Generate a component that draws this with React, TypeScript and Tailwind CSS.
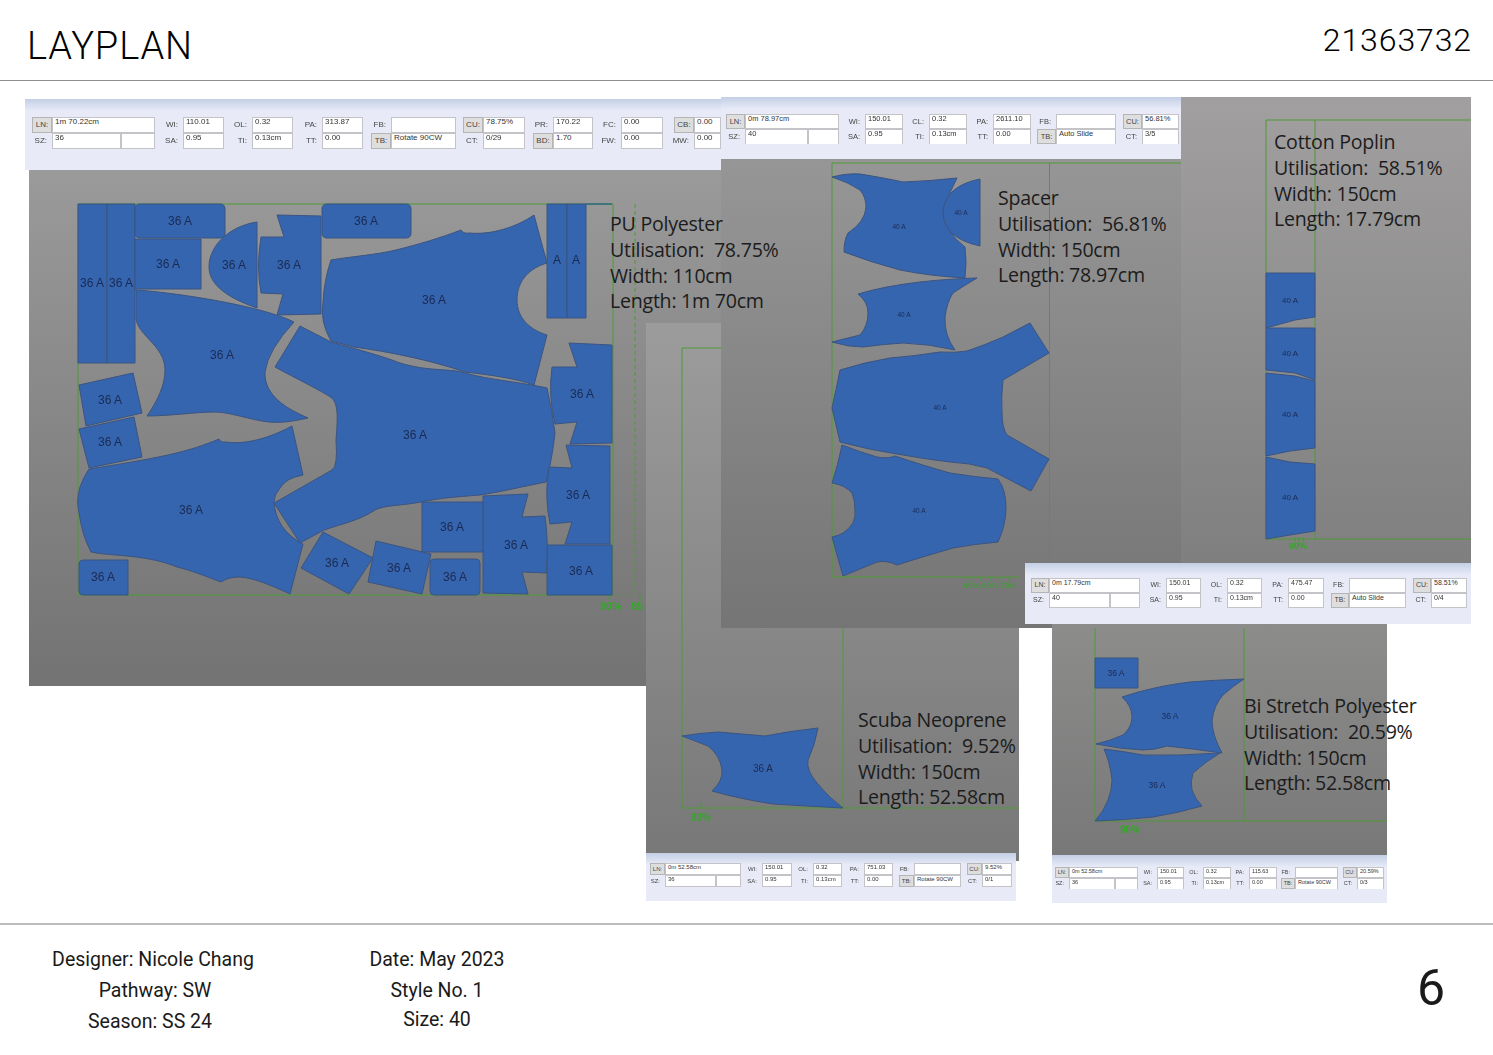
import type { ReactNode } from "react";

type Cell = [string, string, boolean?];
type Col = { a: Cell; b: Cell; split?: string };
type Piece = { d: string; x: number; y: number; tag?: string };

const Field = ({ label, value, on, split, btn, open }: { label: string; value: string; on?: boolean; split?: string; btn: string; open?: boolean }) => (
  <>
    <div className="flex items-stretch justify-end overflow-hidden">
      {on ? (
        <span className={`flex items-center justify-center border-[1.5px] border-[#b5b5b5] bg-[#dedede] text-[#444] ${btn}`}>{label}</span>
      ) : (
        <span className="flex items-center pr-[5px] text-[#444]">{label}</span>
      )}
    </div>
    <div className={`flex overflow-hidden border-[1.5px] border-[#c3c3c8] bg-white ${open ? "border-b-0" : ""}`}>
      <span className="flex-1 overflow-hidden whitespace-nowrap pl-[2px] leading-[1.1] text-[#333]">{value}</span>
      {split ? <span className={`${split} border-l-2 border-[#c3c3c8]`} /> : null}
    </div>
  </>
);

const Toolbar = ({ pos, grid, text, btn, open, cols }: { pos: string; grid: string; text: string; btn: string; open?: boolean; cols: Col[] }) => (
  <div className={`absolute z-10 bg-[linear-gradient(#c3cfe5_0,#e8ebf7_12px)] ${pos}`}>
    <div className={`grid overflow-hidden font-['Liberation_Sans',sans-serif] blur-[0.4px] ${grid} ${text}`}>
      {cols.map((c) => (
        <Field key={c.a[0]} label={c.a[0]} value={c.a[1]} on={c.a[2]} btn={btn} />
      ))}
      {cols.map((c) => (
        <Field key={c.b[0]} label={c.b[0]} value={c.b[1]} on={c.b[2]} split={c.split} btn={btn} open={open} />
      ))}
    </div>
  </div>
);

// one lay plan window, svg is drawn in page coordinates
const Panel = ({ pos, box, tag, labelSize, pieces, children }: { pos: string; box: string; tag: string; labelSize: number; pieces: Piece[]; children?: ReactNode }) => (
  <div className={`absolute overflow-hidden ${pos}`}>
    <svg className="block h-full w-full blur-[0.3px]" viewBox={box}>
      {children}
      {pieces.map((p, i) => (
        <g key={i}>
          <path d={p.d} fill="#3565af" stroke="#3b5480" strokeWidth="1" strokeLinejoin="round" />
          <text x={p.x} y={p.y} fontSize={labelSize} fill="#1b2a52" textAnchor="middle" dominantBaseline="central" fontFamily="Liberation Sans, sans-serif">
            {p.tag ?? tag}
          </text>
        </g>
      ))}
    </svg>
  </div>
);

const Green = ({ d, dash }: { d: string; dash?: boolean }) => (
  <path d={d} fill="none" stroke="#4f9a35" strokeWidth="1" strokeDasharray={dash ? "4 3" : undefined} />
);

const GreenText = ({ x, y, size, children }: { x: number; y: number; size: number; children: string }) => (
  <text x={x} y={y} fontSize={size} fill="#36a52a" textAnchor="middle" fontFamily="Liberation Sans, sans-serif" fontWeight="bold">
    {children}
  </text>
);

const Note = ({ pos, lines }: { pos: string; lines: string[] }) => (
  <div className={`absolute z-20 whitespace-pre font-['Open_Sans',sans-serif] text-[19.6px] leading-[25.8px] tracking-[-0.25px] text-[#1c1c1c] ${pos}`}>
    {lines.map((l) => (
      <div key={l}>{l}</div>
    ))}
  </div>
);

const puPieces: Piece[] = [
  { d: "M78,204H107V363H78Z", x: 92, y: 283 },
  { d: "M107,204H135V363H107Z", x: 121, y: 283 },
  { d: "M140,204H220Q225,204 225,209V233Q225,238 220,238H140Q135,238 135,233V209Q135,204 140,204Z", x: 180, y: 221 },
  { d: "M135,239H201V289H135Z", x: 168, y: 264 },
  { d: "M257,222C230,226 209,245 209,267C209,285 228,298 257,308Z", x: 234, y: 265 },
  { d: "M277,215L321,216V314L277,315L283,294L261,293Q256,267 261,237L284,237Z", x: 289, y: 265 },
  { d: "M327,204H406Q411,204 411,209V233Q411,238 406,238H327Q322,238 322,233V209Q322,204 327,204Z", x: 366, y: 221 },
  { d: "M534,215L547,263C530,268 517,280 517,300C517,318 530,330 547,335L534,385C515,378 490,375 465,372C430,360 390,352 354,347L331,341Q320,322 323,303Q324,280 331,260C355,256 375,255 396,250C420,244 440,238 461,230Q463,234 470,233C490,235 515,228 534,215Z", x: 434, y: 300 },
  { d: "M547,204H567V318H547Z", x: 557, y: 260, tag: "A" },
  { d: "M567,204H586V318H567Z", x: 576, y: 260, tag: "A" },
  { d: "M136,290C170,292 260,305 294,322Q268,350 265,372C264,395 285,408 308,418C290,422 280,423 269,422C250,420 230,412 215,412C195,412 170,416 147,416C158,400 165,385 165,370C165,345 136,335 136,317Z", x: 222, y: 355 },
  { d: "M79,385L133,373L142,413L86,426Z", x: 110, y: 400 },
  { d: "M79,429L134,417L142,457L89,468Z", x: 110, y: 442 },
  { d: "M89,469C115,465 145,460 168,455C190,450 205,445 219,439Q221,443 226,442C240,444 262,442 292,426L303,475Q286,478 280,488Q274,495 274,502Q276,530 303,544L290,594C275,587 255,578 240,577Q228,577 221,582C205,576 190,570 177,567C165,562 155,560 143,558C125,555 105,555 91,552Q82,535 79,513Q76,500 80,487Q84,476 89,469Z", x: 191, y: 510 },
  { d: "M300,326L331,342C360,350 385,357 400,363C430,372 450,368 465,373C490,380 520,382 547,388Q552,410 555,433Q552,460 546,482C525,486 500,492 480,495C455,497 440,498 421,502C400,506 385,505 375,510C360,520 345,523 324,530L300,543L274,503L332,470Q338,466 336,440C338,415 338,405 332,398C320,390 295,378 275,367Z", x: 415, y: 435 },
  { d: "M569,343L612,345V443L570,444L577,422L555,424Q548,395 552,367L577,367Z", x: 582, y: 394 },
  { d: "M566,445L610,446V544H565L572,522L550,524Q544,495 549,467L572,468Z", x: 578, y: 495 },
  { d: "M547,545H612V595H547Z", x: 581, y: 571 },
  { d: "M483,496L528,494L522,517L545,516Q549,545 546,573L522,572L528,594L483,593Z", x: 516, y: 545 },
  { d: "M422,502H483V552H422Z", x: 452, y: 527 },
  { d: "M434,559H476Q480,559 480,563V591Q480,595 476,595H434Q430,595 430,591V563Q430,559 434,559Z", x: 455, y: 577 },
  { d: "M323,532L373,558L349,594L301,568Z", x: 337, y: 563 },
  { d: "M376,541L431,554L422,594L368,582Z", x: 399, y: 568 },
  { d: "M83,560H128V595H83Q79,595 79,591V564Q79,560 83,560Z", x: 103, y: 577 },
];

const spacerPieces: Piece[] = [
  { d: "M832,177Q848,173 860,174Q885,178 903,182Q930,181 957,178Q948,195 943,212Q945,232 965,247Q967,262 965,278Q930,276 900,270Q870,262 844,252Q844,240 848,233Q865,222 866,207Q866,197 860,190Q848,182 832,177Z", x: 899, y: 226 },
  { d: "M980,179V246Q943,238 943,212Q945,186 980,179Z", x: 961, y: 212 },
  { d: "M977,278Q945,279 920,282Q885,286 858,294Q868,302 868,313Q868,326 860,335Q848,338 832,342Q848,347 863,347Q885,344 903,343Q930,344 955,350Q944,335 945,317Q947,302 953,293Q965,285 977,278Z", x: 904, y: 314 },
  { d: "M1030,323L1049,353L1003,380Q1001,396 1002,413Q1002,428 1007,435L1049,459L1031,491Q1010,480 987,468Q970,463 950,462Q925,459 897,454Q870,450 840,442Q836,425 832,408Q836,390 840,370Q865,362 890,358Q915,356 940,352Q955,353 967,351Q985,345 1003,337Z", x: 940, y: 407 },
  { d: "M842,445Q860,452 877,457Q888,459 895,456Q925,466 950,473Q975,477 998,479Q1006,490 1006,507Q1006,525 998,542Q975,544 953,548Q925,556 897,565Q887,560 877,562Q860,569 843,576Q837,555 832,537Q845,535 853,523Q856,516 855,510Q855,500 852,493Q845,485 832,483Q838,465 842,445Z", x: 919, y: 510 },
];

const cottonPieces: Piece[] = [
  { d: "M1266,273H1315V317L1295,320L1266,328Z", x: 1290, y: 300 },
  { d: "M1266,328H1315V380L1295,373L1266,370Z", x: 1290, y: 353 },
  { d: "M1266,373L1295,376L1315,381V448L1290,451L1266,456Z", x: 1290, y: 414 },
  { d: "M1266,457L1290,462L1315,464V531L1290,535L1266,539Z", x: 1290, y: 497 },
];

const scubaPieces: Piece[] = [
  { d: "M682,736Q700,733 718,732Q742,734 765,736Q790,731 818,728Q815,745 808,760Q806,770 817,783Q828,797 843,808Q805,806 773,804Q740,799 712,791Q723,781 722,770Q720,755 708,746Q695,741 682,736Z", x: 763, y: 768 },
];

const biPieces: Piece[] = [
  { d: "M1095,658H1138V688H1095Z", x: 1116, y: 673 },
  { d: "M1244,679Q1215,680 1190,682Q1155,686 1122,697Q1132,706 1132,717Q1132,727 1123,735Q1110,741 1096,744Q1120,749 1143,750Q1155,750 1167,746Q1195,749 1222,753Q1212,735 1212,720Q1214,705 1223,695Q1233,686 1244,679Z", x: 1170, y: 716 },
  { d: "M1104,749Q1122,751 1143,755Q1180,756 1220,753Q1205,762 1193,773Q1190,782 1192,790Q1195,799 1202,806Q1178,813 1153,817Q1125,820 1095,821Q1104,811 1108,800Q1112,790 1112,780Q1110,762 1104,749Z", x: 1157, y: 785 },
];

const puCols: Col[] = [
  { a: ["LN:", "1m 70.22cm", true], b: ["SZ:", "36"], split: "w-[34px]" },
  { a: ["WI:", "110.01"], b: ["SA:", "0.95"] },
  { a: ["OL:", "0.32"], b: ["TI:", "0.13cm"] },
  { a: ["PA:", "313.87"], b: ["TT:", "0.00"] },
  { a: ["FB:", ""], b: ["TB:", "Rotate 90CW", true] },
  { a: ["CU:", "78.75%", true], b: ["CT:", "0/29"] },
  { a: ["PR:", "170.22"], b: ["BD:", "1.70", true] },
  { a: ["FC:", "0.00"], b: ["FW:", "0.00"] },
  { a: ["CB:", "0.00", true], b: ["MW:", "0.00"] },
];

const shortCols = (ln: string, sz: string, pa: string, tb: string, cu: string, ct: string, split: string, ol = "OL:", ti = "TI:"): Col[] => [
  { a: ["LN:", ln, true], b: ["SZ:", sz], split },
  { a: ["WI:", "150.01"], b: ["SA:", "0.95"] },
  { a: [ol, "0.32"], b: [ti, "0.13cm"] },
  { a: ["PA:", pa], b: ["TT:", "0.00"] },
  { a: ["FB:", ""], b: ["TB:", tb, true] },
  { a: ["CU:", cu, true], b: ["CT:", ct] },
];

export default function App() {
  return (
    <div className="w-[1493px] h-[1055px] overflow-hidden bg-white text-black">
      <header className="flex h-[81px] items-center justify-between border-b border-[#8e8e8e] pl-[27px] pr-[21px] font-['Roboto',sans-serif]">
        <h1 className="pt-[12px] text-[38px] font-light tracking-[0.9px]">LAYPLAN</h1>
        <span className="pb-[1px] text-[32px] font-light tracking-[0.9px]">21363732</span>
      </header>

      <main className="relative h-[842px]">
        {/* PU polyester */}
        <Panel pos="left-[29px] top-[89px] w-[692px] h-[516px] bg-gradient-to-b from-[#9a9a9a] to-[#737373]" box="29 170 692 516" tag="36 A" labelSize={12} pieces={puPieces}>
          <Green d="M78,204H613V595H78Z" />
          <Green d="M635,204V595" dash />
          <path d="M613,595H640" stroke="#6a8a5a" strokeWidth="0.6" />
          <path d="M586,204H612" stroke="#2f6b86" strokeWidth="1.5" />
          <path d="M609,595V600M640,595V600" stroke="#36a52a" strokeWidth="0.8" />
          <GreenText x={611} y={610} size={11}>90%</GreenText>
          <GreenText x={637} y={610} size={11}>85</GreenText>
        </Panel>
        <Toolbar
          pos="left-[25px] top-[18px] w-[696px] h-[71px] pl-[6px] pt-[18px]"
          grid="grid-cols-[21px_103px_28px_41px_28px_41px_29px_41px_28px_65px_27px_42px_28px_40px_28px_42px_31px_27px] grid-rows-[16px_16px]"
          text="text-[8px]"
          btn="w-[20px]"
          cols={puCols}
        />

        {/* Scuba neoprene */}
        <Panel pos="left-[646px] top-[242px] w-[373px] h-[538px] bg-gradient-to-b from-[#9c9c9c] to-[#787878]" box="646 323 373 538" tag="36 A" labelSize={10} pieces={scubaPieces}>
          <Green d="M682,808V348H843V808M682,808H1019" />
          <path d="M701,803V808" stroke="#36a52a" />
          <GreenText x={701} y={821} size={10}>90%</GreenText>
        </Panel>
        <Toolbar
          pos="left-[646px] top-[772px] w-[370px] h-[48px] pl-[4px] pt-[10px]"
          grid="grid-cols-[15px_76px_21px_30px_21px_29px_22px_29px_21px_47px_21px_30px] grid-rows-[12px_12px]"
          text="text-[6px]"
          btn="w-[15px]"
          cols={shortCols("0m 52.58cm", "36", "751.03", "Rotate 90CW", "9.52%", "0/1", "w-[25px]")}
        />

        {/* Spacer */}
        <Panel pos="left-[721px] top-[78px] w-[460px] h-[469px] bg-gradient-to-b from-[#969696] to-[#757575]" box="721 159 460 469" tag="40 A" labelSize={6.5} pieces={spacerPieces}>
          <Green d="M1181,163H832V577H1020M1049.5,163V563" />
          <path d="M970,577V581M980,577V581M990,577V581M1000,577V581M1009,577V581" stroke="#36a52a" strokeWidth="0.8" />
          <GreenText x={990} y={588} size={8}>90% 80% 70%</GreenText>
        </Panel>
        <Toolbar
          pos="left-[721px] top-[16px] w-[460px] h-[62px] pl-[4px] pt-[17px]"
          grid="grid-cols-[20px_94px_26px_38px_26px_38px_26px_38px_25px_60px_26px_37px] grid-rows-[15px_15px]"
          text="text-[7.5px]"
          btn="w-[19px]"
          open
          cols={shortCols("0m 78.97cm", "40", "2611.10", "Auto Slide", "56.81%", "3/5", "w-[31px]", "CL:", "TI:")}
        />

        {/* Cotton poplin */}
        <Panel pos="left-[1181px] top-[16px] w-[290px] h-[527px] bg-gradient-to-b from-[#a19f9f] to-[#7b7b7b]" box="1181 97 290 527" tag="40 A" labelSize={8} pieces={cottonPieces}>
          <Green d="M1471,120H1266V539H1471M1315,120V539" />
          <path d="M1295,537V545M1299,537V545M1303,537V545" stroke="#36a52a" strokeWidth="0.8" />
          <GreenText x={1298} y={549} size={9}>90%</GreenText>
        </Panel>
        <Toolbar
          pos="left-[1025px] top-[482px] w-[446px] h-[61px] pl-[6px] pt-[15px]"
          grid="grid-cols-[18px_91px_26px_35px_26px_35px_26px_36px_25px_57px_25px_36px] grid-rows-[15px_15px]"
          text="text-[7px]"
          btn="w-[18px]"
          cols={shortCols("0m 17.79cm", "40", "475.47", "Auto Slide", "58.51%", "0/4", "w-[30px]")}
        />

        {/* Bi stretch polyester */}
        <Panel pos="left-[1052px] top-[543px] w-[335px] h-[232px] bg-gradient-to-b from-[#8c8d8b] to-[#787878]" box="1052 624 335 232" tag="36 A" labelSize={8.5} pieces={biPieces}>
          <Green d="M1095,628V821H1387M1244,628V821" />
          <GreenText x={1130} y={833} size={10}>90%</GreenText>
        </Panel>
        <Toolbar
          pos="left-[1052px] top-[774px] w-[335px] h-[48px] pl-[3px] pt-[12px]"
          grid="grid-cols-[14px_69px_19px_27px_19px_28px_18px_28px_18px_43px_19px_27px] grid-rows-[11px_11px]"
          text="text-[5.5px]"
          btn="w-[14px]"
          open
          cols={shortCols("0m 52.58cm", "36", "115.63", "Rotate 90CW", "20.59%", "0/3", "w-[23px]")}
        />

        <Note pos="left-[610px] top-[130px]" lines={["PU Polyester", "Utilisation:  78.75%", "Width: 110cm", "Length: 1m 70cm"]} />
        <Note pos="left-[998px] top-[104px]" lines={["Spacer", "Utilisation:  56.81%", "Width: 150cm", "Length: 78.97cm"]} />
        <Note pos="left-[1274px] top-[48px]" lines={["Cotton Poplin", "Utilisation:  58.51%", "Width: 150cm", "Length: 17.79cm"]} />
        <Note pos="left-[858px] top-[626px]" lines={["Scuba Neoprene", "Utilisation:  9.52%", "Width: 150cm", "Length: 52.58cm"]} />
        <Note pos="left-[1244px] top-[612px]" lines={["Bi Stretch Polyester", "Utilisation:  20.59%", "Width: 150cm", "Length: 52.58cm"]} />
      </main>

      <footer className="flex h-[132px] border-t-2 border-[#bdbdbd] pt-[19px] font-['Roboto',sans-serif] text-[19.5px] leading-[31px] text-[#1a1a1a]">
        <div className="w-[306px] text-center">
          <p>Designer: Nicole Chang</p>
          <p className="pl-[4px]">Pathway: SW</p>
          <p className="pr-[6px]">Season: SS 24</p>
        </div>
        <div className="w-[262px] text-center">
          <p>Date: May 2023</p>
          <p>Style No. 1</p>
          <p className="-mt-[2px]">Size: 40</p>
        </div>
        <div className="ml-auto pr-[48px] pt-[19px] text-[50px] leading-none">6</div>
      </footer>
    </div>
  );
}
